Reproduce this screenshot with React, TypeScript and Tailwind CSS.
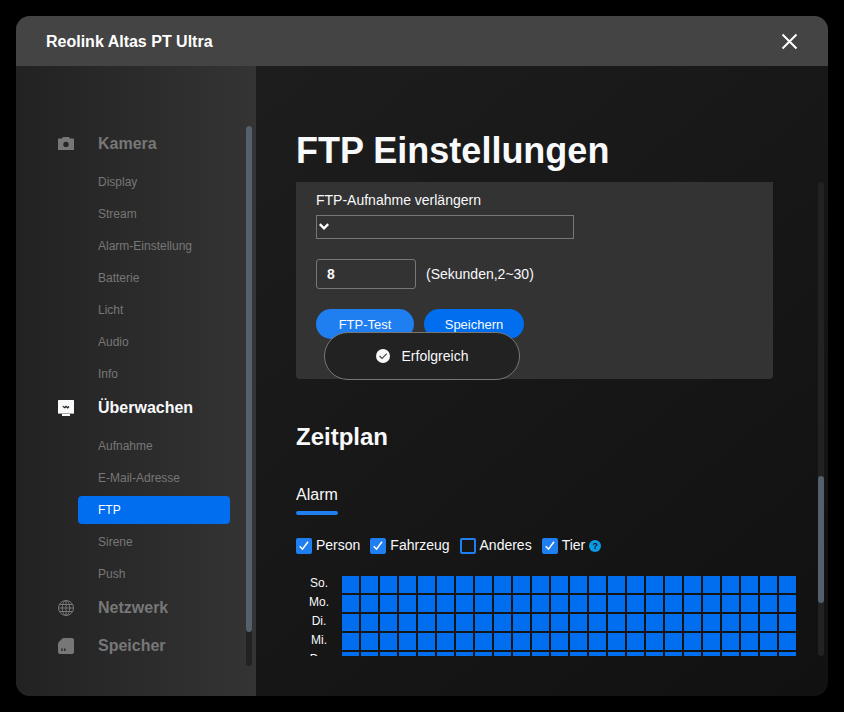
import React, { useState } from 'react';

interface MenuGroup {
  name: string;
  icon: React.ReactNode;
  items: string[];
}

const CameraIcon = () => (
  <svg width="16" height="16" viewBox="0 0 16 16" fill="currentColor" aria-hidden="true">
    <path
      fillRule="evenodd"
      d="M5 1h6l1 1.500h3.400a.6.6 0 0 1 .6.6v10.300a.6.6 0 0 1-.6.6H.6a.6.6 0 0 1-.6-.6V3.100a.6.6 0 0 1 .6-.6H4zM8 5.700a2.700 2.700 0 1 0 0 5.400 2.700 2.700 0 0 0 0-5.400z"
    />
  </svg>
);

const MonitorIcon = () => (
  <svg width="16" height="16" viewBox="0 0 16 16" aria-hidden="true">
    <rect width="16" height="13.500" rx=".6" fill="currentColor" />
    <rect y="13" width="16" height="1" fill="#a5a5a5" />
    <rect x="4" y="14" width="8" height="2" fill="currentColor" />
    <path d="M4.800 6.200l2 1.500L8 6.300l1.700 1.500L11 6.500" fill="none" stroke="#222" strokeWidth="1.300" />
  </svg>
);

const GlobeIcon = () => (
  <svg width="16" height="16" viewBox="0 0 16 16" fill="none" stroke="currentColor" aria-hidden="true">
    <circle cx="8" cy="8" r="7.500" />
    <ellipse cx="8" cy="8" rx="3.700" ry="7.500" />
    <path d="M8 .5v15M.5 8h15M1.700 4.500h12.600M1.700 11.500h12.600" />
  </svg>
);

const CardIcon = () => (
  <svg width="16" height="16" viewBox="0 0 16 16" aria-hidden="true">
    <path fill="currentColor" d="M6 0h8a2 2 0 0 1 2 2v12a2 2 0 0 1-2 2H2a2 2 0 0 1-2-2V6a3 3 0 0 1 .8-2L4 .8A3 3 0 0 1 6 0z" />
    <path d="M4 10.500v2.500M6.800 10.500v2.500" stroke="#262626" strokeWidth="1.400" />
  </svg>
);

const menu: MenuGroup[] = [
  {
    name: 'Kamera',
    icon: <CameraIcon />,
    items: ['Display', 'Stream', 'Alarm-Einstellung', 'Batterie', 'Licht', 'Audio', 'Info'],
  },
  {
    name: 'Überwachen',
    icon: <MonitorIcon />,
    items: ['Aufnahme', 'E-Mail-Adresse', 'FTP', 'Sirene', 'Push'],
  },
  { name: 'Netzwerk', icon: <GlobeIcon />, items: [] },
  { name: 'Speicher', icon: <CardIcon />, items: [] },
];

const days = ['So.', 'Mo.', 'Di.', 'Mi.', 'Do.', 'Fr.', 'Sa.'];
const hours = Array.from({ length: 24 }, (_, i) => i);

const Sidebar = () => (
  <aside className="flex w-60 shrink-0 overflow-hidden bg-linear-to-r from-[#222222] to-[#343434]">
    <nav className="mr-4 flex-1 pt-[59px]">
      {menu.map((group) => {
        const open = group.items.includes('FTP');
        return (
          <div key={group.name}>
            <a
              href="#"
              className={`flex h-[38px] items-center gap-6 pl-[42px] text-base font-bold ${open ? 'text-[#f8f9fb]' : 'text-[#777777]'}`}
            >
              {group.icon}
              {group.name}
            </a>
            {group.items.length > 0 && (
              <ul className="flex flex-col gap-1 pt-[5px] pb-px pl-[62px]">
                {group.items.map((item) => (
                  <li key={item}>
                    <a
                      href="#"
                      className={`flex h-7 items-center rounded-sm pl-5 text-xs ${item === 'FTP' ? 'bg-[#006eef] text-white' : 'text-[#777777]'}`}
                    >
                      {item}
                    </a>
                  </li>
                ))}
              </ul>
            )}
          </div>
        );
      })}
    </nav>
    <div className="mt-[60px] mr-1 mb-[30px] w-1.5 rounded-full bg-[#222222]">
      <div className="h-[506px] rounded-full bg-[#54606c]" />
    </div>
  </aside>
);

interface CheckProps {
  label: string;
  initial: boolean;
}

const Check = ({ label, initial }: CheckProps) => {
  const [checked, setChecked] = useState(initial);
  return (
    <label className="flex items-center gap-1">
      <span className="relative size-4">
        <input
          type="checkbox"
          checked={checked}
          onChange={() => setChecked(!checked)}
          className="block size-4 appearance-none rounded-xs border-2 border-[#1f7ff0] checked:bg-[#1f7ff0]"
        />
        {checked && (
          <svg className="pointer-events-none absolute inset-0" width="16" height="16" viewBox="0 0 16 16" fill="none" stroke="white" strokeWidth="1.500">
            <path d="M3.700 8.300l2.800 2.900 5.500-7.400" />
          </svg>
        )}
      </span>
      <span className="-mt-0.5">{label}</span>
    </label>
  );
};

const Schedule = () => (
  <table className="w-full table-fixed border-separate border-spacing-0.5">
    <tbody>
      {days.map((day) => (
        <tr key={day}>
          <th className="h-[17px] w-[42px] p-0 pb-0.5 text-xs leading-[15px] font-normal">{day}</th>
          {hours.map((h) => (
            <td key={h} className="h-[17px] bg-[#006eef] p-0" />
          ))}
        </tr>
      ))}
    </tbody>
  </table>
);

const Toast = () => (
  <div
    role="status"
    className="fixed top-1/2 left-1/2 flex h-12 w-[196px] -translate-x-1/2 -translate-y-1/2 items-center justify-center gap-3 rounded-full border border-[#777777] bg-[#222222] text-sm"
  >
    <svg width="14" height="14" viewBox="0 0 14 14" aria-hidden="true">
      <circle cx="7" cy="7" r="7" fill="#f8f9fb" />
      <path d="M3.500 7l2.500 2.500 4.800-4.800" fill="none" stroke="#444" strokeWidth="1.100" />
    </svg>
    Erfolgreich
  </div>
);

const App: React.FC = () => {
  const [seconds, setSeconds] = useState('8');

  return (
    <div className="h-screen bg-black p-4 font-['Liberation_Sans',Arial,sans-serif] text-[#f8f9fb]">
      <div className="flex h-full flex-col overflow-hidden rounded-[14px] bg-linear-to-br from-[#202020] to-[#111111]">
        <header className="flex h-[50px] shrink-0 items-center justify-between bg-[#444444] px-[30px]">
          <h2 className="pt-0.5 text-base font-bold text-white">Reolink Altas PT Ultra</h2>
          <button type="button" aria-label="Schließen">
            <svg width="17" height="17" viewBox="0 0 17 17" fill="none" stroke="white" strokeWidth="2">
              <path d="M1.500 1.500l14 14M15.500 1.500l-14 14" />
            </svg>
          </button>
        </header>

        <div className="flex min-h-0 flex-1">
          <Sidebar />
          <main className="flex min-w-0 flex-1 flex-col pt-[60px] pr-1 pb-10 pl-10">
            <h1 className="mb-1.5 text-4xl leading-[50px] font-bold">FTP Einstellungen</h1>
            <div className="flex min-h-0 flex-1">
              <div className="min-w-0 flex-1 overflow-hidden">
                <form className="mr-[45px] rounded-b-sm bg-[#333333] px-5 pt-2 pb-10 text-sm" onSubmit={(e) => e.preventDefault()}>
                  <label htmlFor="extend" className="block">FTP-Aufnahme verlängern</label>
                  <div className="relative mt-[5px] w-[258px]">
                    <select id="extend" className="block h-6 w-full appearance-none border border-[#777777] bg-transparent" />
                    <svg className="pointer-events-none absolute top-2 left-[3px]" width="10" height="8" viewBox="0 0 10 8" fill="none" stroke="white" strokeWidth="2.400">
                      <path d="M.8 1.200L5 5.400l4.200-4.200" />
                    </svg>
                  </div>
                  <div className="mt-5 flex items-center gap-2.5">
                    <input
                      id="seconds"
                      value={seconds}
                      onChange={(e) => setSeconds(e.target.value)}
                      className="h-[30px] w-[100px] rounded-[3px] border border-[#777777] bg-transparent px-2.5 font-bold"
                    />
                    <label htmlFor="seconds">(Sekunden,2~30)</label>
                  </div>
                  <div className="mt-5 flex gap-2.5 text-[13px]">
                    <button type="button" className="h-[30px] w-[98px] rounded-full bg-[#1f7ff0] pt-0.5">FTP-Test</button>
                    <button type="submit" className="h-[30px] w-[100px] rounded-full bg-[#006eef] pt-0.5">Speichern</button>
                  </div>
                </form>

                <h2 className="mt-[42px] text-2xl leading-8 font-bold">Zeitplan</h2>
                <button type="button" className="mt-[30px] block text-base">
                  Alarm
                  <span className="mt-1 block h-1 rounded-full bg-[#1f7ff0]" />
                </button>
                <div className="mt-[21px] flex h-5 items-center gap-2.5 text-sm">
                  <Check label="Person" initial />
                  <Check label="Fahrzeug" initial />
                  <Check label="Anderes" initial={false} />
                  <div className="flex items-center gap-1">
                    <Check label="Tier" initial />
                    <button type="button" aria-label="Hilfe" className="flex size-3 items-center justify-center rounded-full bg-[#0a9be6] text-[9px] leading-3 font-bold text-[#151515]">
                      ?
                    </button>
                  </div>
                </div>
                <div className="mt-[18px] mr-5">
                  <Schedule />
                </div>
              </div>
              <div className="w-1.5 shrink-0 rounded-full bg-[#222222] pt-[294px]">
                <div className="h-[127px] rounded-full bg-[#54606c]" />
              </div>
            </div>
          </main>
        </div>
      </div>
      <Toast />
    </div>
  );
};

export default App;
